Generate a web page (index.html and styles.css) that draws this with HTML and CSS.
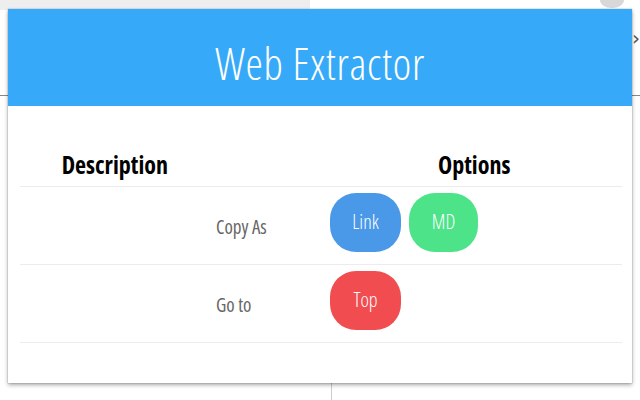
FILE: index.html
```html
<!DOCTYPE html>
<html>
<head>
<meta charset="utf-8">
<link rel="stylesheet" href="styles.css">
</head>
<body>
<div class="backdrop">
  <div class="bg-top"><span class="bg-circle"></span></div>
  <span class="bg-chevron">›</span>
  <span class="bg-line-left"></span>
  <span class="bg-line-right"></span>
  <span class="bg-vline"></span>
</div>
<div class="popup">
  <header class="header"><h1 class="title">Web Extractor</h1></header>
  <div class="table">
    <div class="row head">
      <div class="col-desc">Description</div>
      <div class="col-opt">Options</div>
    </div>
    <div class="row">
      <div class="label">Copy As</div>
      <div class="buttons">
        <button class="btn blue">Link</button>
        <button class="btn green">MD</button>
      </div>
    </div>
    <div class="row">
      <div class="label">Go to</div>
      <div class="buttons">
        <button class="btn red">Top</button>
      </div>
    </div>
  </div>
</div>
</body>
</html>
```
FILE: styles.css
```css
html, body { margin: 0; padding: 0; }
body {
  width: 640px; height: 400px; overflow: hidden;
  background: #ffffff;
  position: relative;
  font-family: "Open Sans", "Noto Sans", sans-serif;
}
.backdrop { position: absolute; inset: 0; }
.bg-top { position: absolute; left: 0; top: 0; width: 310px; height: 10px; background: #eeeeee; }
.bg-circle { position: absolute; left: 600px; top: -8px; width: 24px; height: 16px; border-radius: 50%; background: #d8d8d8; }
.bg-chevron { position: absolute; left: 632px; top: 26px; font-size: 20px; color: #555; font-family: "DejaVu Sans", sans-serif; }
.bg-line-left { position: absolute; left: 0; top: 95px; width: 10px; height: 1px; background: #888; }
.bg-line-right { position: absolute; left: 630px; top: 95px; width: 10px; height: 1px; background: #888; }
.bg-vline { position: absolute; left: 331px; top: 380px; width: 1px; height: 20px; background: #cccccc; }

.popup {
  position: absolute; left: 8px; top: 9px;
  width: 624px; height: 374px;
  background: #fff;
  box-shadow: 0 2px 4px rgba(0,0,0,0.35), 0 0 1px rgba(0,0,0,0.4);
  display: flex; flex-direction: column;
}
.header {
  height: 97px; background: #36a9f8;
  display: flex; align-items: center; justify-content: center;
}
.title {
  margin: 0; color: #fff; font-weight: 300;
  font-size: 44px; font-stretch: 75%;
  letter-spacing: 0.7px;
  padding-top: 10px;
}
.table { margin: 41px 10px 0 12px; }
.row {
  box-sizing: border-box;
  display: flex; align-items: center;
  height: 78px;
  border-bottom: 1px solid #ececec;
}
.row.head { height: 40px; align-items: flex-start; }
.col-desc, .col-opt { font-weight: 700; font-size: 24px; font-stretch: 75%; color: #000; line-height: 30px; padding-top: 3px; }
.col-desc { width: 148px; text-align: right; }
.col-opt { margin-left: 270px; }
.label { margin-left: 196px; width: 114px; font-size: 19px; font-stretch: 75%; color: #666; padding-top: 2px; }
.buttons { display: flex; gap: 8px; margin-top: -6px; }
.btn {
  border: none; width: 71px; height: 59px; border-radius: 26px;
  color: #fff; font-family: inherit; font-size: 20px; font-weight: 300; font-stretch: 75%;
  padding: 0 0 2px;
}
.blue { background: #4a98e8; }
.green { background: #4ce389; width: 69px; }
.red { background: #f14c4f; }
```
